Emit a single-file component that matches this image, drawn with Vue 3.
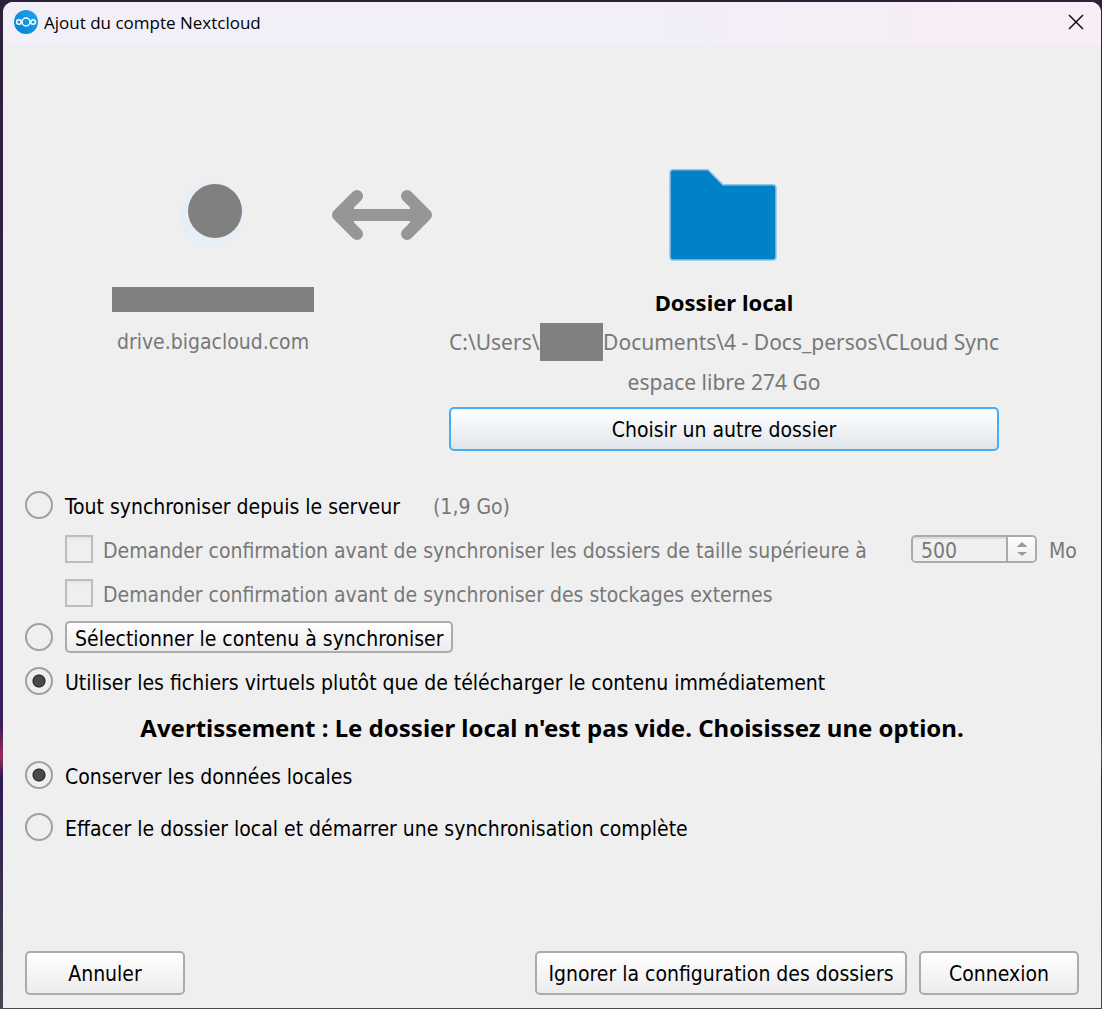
<script setup>
import { ref } from 'vue'

const syncMode = ref('virtual')
const localData = ref('keep')
const confirmSize = ref(false)
const confirmExternal = ref(false)
const maxSize = ref('500')
</script>

<template>
  <div class="desktop">
    <div class="dialog">
      <header class="titlebar">
        <svg class="logo" viewBox="0 0 24 24" aria-hidden="true">
          <defs>
            <linearGradient id="logo-fill" x1="0" y1="1" x2="1" y2="0">
              <stop offset="0" stop-color="#0a7fd0" />
              <stop offset="1" stop-color="#1aa7f2" />
            </linearGradient>
          </defs>
          <circle cx="12" cy="12" r="12" fill="url(#logo-fill)" />
          <g fill="none" stroke="#fff" stroke-width="1.5">
            <circle cx="12" cy="12" r="4" />
            <circle cx="4.9" cy="12" r="2.3" />
            <circle cx="19.1" cy="12" r="2.3" />
          </g>
        </svg>
        <h1 class="title">Ajout du compte Nextcloud</h1>
        <button class="close" type="button" aria-label="Fermer">
          <svg viewBox="0 0 16 16" width="16" height="16"><path d="M1 1 15 15M15 1 1 15" stroke="#111" stroke-width="1.5" /></svg>
        </button>
      </header>

      <main class="content">
        <section class="accounts">
          <div class="side">
            <div class="picture">
              <svg width="66" height="66" viewBox="0 0 66 66" aria-hidden="true">
                <circle cx="32" cy="33" r="32" fill="#e8eef8" />
                <circle cx="35" cy="29" r="27" fill="#808080" />
              </svg>
            </div>
            <div class="line name"><span class="mask user"></span></div>
            <div class="line muted">drive.bigacloud.com</div>
          </div>

          <div class="picture link">
            <svg width="100" height="52" viewBox="0 0 100 52" aria-hidden="true">
              <g fill="none" stroke="#969696" stroke-width="12" stroke-linecap="round" stroke-linejoin="round">
                <path d="M10 26H90" />
                <path d="M25 7 6 26 25 45" />
                <path d="M75 7 94 26 75 45" />
              </g>
              <path d="M6 26 22 12V40ZM94 26 78 12V40Z" fill="#969696" />
            </svg>
          </div>

          <div class="side local">
            <div class="picture">
              <svg width="110" height="92" viewBox="0 0 110 92" aria-hidden="true">
                <path d="M4 .8H39L54 15.800H104Q107 15.800 107 19V88Q107 91 104 91H4Q1 91 1 88V4Q1 .8 4 .8Z" fill="#0082c9" stroke="#8fc6e4" stroke-width="1.500" />
              </svg>
            </div>
            <h2 class="line strong">Dossier local</h2>
            <div class="line muted detail">
              <span>C:\Users\</span><span class="mask folder"></span><span>Documents\4 - Docs_persos\CLoud Sync</span>
            </div>
            <div class="line muted detail">espace libre 274 Go</div>
            <button class="btn focused" type="button">Choisir un autre dossier</button>
          </div>
        </section>

        <section class="options">
          <div class="row">
            <input id="all" v-model="syncMode" type="radio" name="sync" value="all" />
            <label class="main-label" for="all">Tout synchroniser depuis le serveur</label>
            <span class="muted total">(1,9 Go)</span>
          </div>
          <div class="row sub muted">
            <input id="size" v-model="confirmSize" type="checkbox" disabled />
            <label for="size">Demander confirmation avant de synchroniser les dossiers de taille supérieure à</label>
            <span class="spin">
              <input id="limit" v-model="maxSize" type="text" disabled />
              <span class="arrows" aria-hidden="true">
                <svg width="12" height="14" viewBox="0 0 12 14"><path d="M6 0 11.500 5H.5ZM6 14 11 10H1Z" fill="#9c9c9c" /></svg>
              </span>
            </span>
            <label class="unit" for="limit">Mo</label>
          </div>
          <div class="row sub muted">
            <input id="external" v-model="confirmExternal" type="checkbox" disabled />
            <label for="external">Demander confirmation avant de synchroniser des stockages externes</label>
          </div>
          <div class="row">
            <input v-model="syncMode" type="radio" name="sync" value="select" aria-label="Sélectionner le contenu à synchroniser" />
            <button class="btn compact" type="button">Sélectionner le contenu à synchroniser</button>
          </div>
          <div class="row">
            <input id="virtual" v-model="syncMode" type="radio" name="sync" value="virtual" />
            <label for="virtual">Utiliser les fichiers virtuels plutôt que de télécharger le contenu immédiatement</label>
          </div>
        </section>

        <p class="warning strong">Avertissement : Le dossier local n'est pas vide. Choisissez une option.</p>

        <section class="options spaced">
          <div class="row">
            <input id="keep" v-model="localData" type="radio" name="local" value="keep" />
            <label for="keep">Conserver les données locales</label>
          </div>
          <div class="row">
            <input id="erase" v-model="localData" type="radio" name="local" value="erase" />
            <label for="erase">Effacer le dossier local et démarrer une synchronisation complète</label>
          </div>
        </section>
      </main>

      <footer class="footer">
        <button class="btn action cancel" type="button">Annuler</button>
        <button class="btn action skip" type="button">Ignorer la configuration des dossiers</button>
        <button class="btn action" type="button">Connexion</button>
      </footer>
    </div>
  </div>
</template>

<style>
body {
  margin: 0;
}
</style>

<style scoped>
* {
  box-sizing: border-box;
}

.desktop {
  display: flex;
  min-height: 100vh;
  padding: 2px 1px 1px 3px;
  background: linear-gradient(#2c2138, #3b1f5c 60%, #3b1f5c 72%, #a02a55 75%, #2d1a55 77%, #4a444e);
  font-family: Tahoma, "DejaVu Sans Condensed", "Noto Sans", sans-serif;
  font-size: 21px;
  line-height: 28px;
  color: #000;
}

.dialog {
  flex: 1;
  display: flex;
  flex-direction: column;
  border-radius: 10px 10px 0 0;
  overflow: hidden;
  background: #efefef;
}

.titlebar {
  display: flex;
  align-items: center;
  gap: 6px;
  height: 43px;
  padding: 0 17px 3px 11px;
  background: linear-gradient(90deg, #f2eff8 60%, #f9edf6);
}

.logo {
  width: 24px;
  height: 24px;
}

.title {
  flex: 1;
  margin: 0;
  padding-top: 1px;
  font: 400 17px/24px "Segoe UI", "Open Sans", sans-serif;
}

.close {
  display: flex;
  padding: 0;
  border: 0;
  background: none;
}

.content {
  flex: 1;
  padding: 124px 22px 0;
}

.accounts {
  display: flex;
  justify-content: center;
  gap: 17px;
  padding-left: 7px;
}

.side {
  display: flex;
  flex-direction: column;
  align-items: center;
}

.local {
  width: 550px;
}

.picture {
  display: flex;
  align-items: center;
  justify-content: center;
  height: 92px;
}

.link {
  padding-left: 1px;
}

.picture + .line {
  margin-top: 21px;
}

.line {
  display: flex;
  align-items: center;
  justify-content: center;
  width: 100%;
  height: 40px;
  margin: 0;
  white-space: nowrap;
}

.mask {
  background: #808080;
}

.user {
  width: 202px;
  height: 25px;
  margin-bottom: 5px;
}

.folder {
  flex: 1;
  height: 38px;
}

.muted {
  color: #787878;
}

.detail,
.strong {
  font-family: Tahoma, "Noto Sans", sans-serif;
}

.strong {
  font-size: 22px;
  font-weight: 700;
}

.btn {
  padding: 2px 8px 0;
  border: 2px solid #ababab;
  border-radius: 5px;
  background: linear-gradient(#fff, #ececec);
  font: inherit;
  color: #000;
  white-space: nowrap;
}

.focused {
  width: 100%;
  height: 44px;
  margin-top: 5px;
  border-color: #43adf8;
  background: linear-gradient(#fff, #e1e6eb);
}

.compact {
  height: 32px;
}

.options {
  display: flex;
  flex-direction: column;
  margin-top: 32px;
}

.spaced {
  gap: 8px;
  margin-top: 0;
}

.row {
  display: flex;
  align-items: center;
  height: 44px;
  white-space: nowrap;
}

.row > label,
.total {
  padding-top: 3px;
}

.main-label {
  min-width: 345px;
}

.row > input {
  flex: none;
  appearance: none;
  width: 28px;
  height: 28px;
  margin: 0 12px 0 0;
  border: 2px solid #a0a0a0;
}

.row > input[type="radio"] {
  border-radius: 50%;
}

.row > input[type="radio"]:checked {
  background: radial-gradient(circle, #4a4a4a 5px, #222 6px, transparent 7px);
}

.row > input[type="checkbox"] {
  margin-right: 10px;
  border-color: #bdbdbd;
  box-shadow: inset 0 2px 2px #e4e4e4;
}

.sub {
  padding-left: 40px;
}

.total {
  margin-left: 23px;
}

.spin {
  display: flex;
  width: 126px;
  height: 28px;
  margin: 0 12px 0 auto;
  border: 2px solid #ababab;
  border-radius: 5px;
  background: #efefef;
  overflow: hidden;
}

.spin input {
  flex: 1;
  min-width: 0;
  padding: 3px 0 0 8px;
  border: 0;
  background: linear-gradient(#dcdcdc 2px, #efefef 2px);
  font: inherit;
  line-height: 21px;
  color: inherit;
}

.arrows {
  display: flex;
  align-items: center;
  justify-content: center;
  width: 29px;
  border-left: 2px solid #ababab;
  background: linear-gradient(#fdfdfd, #efefef);
}

.unit {
  min-width: 30px;
}

.warning {
  margin: 0;
  padding: 11px 0;
  font-size: 24px;
  text-align: center;
}

.footer {
  display: flex;
  gap: 12px;
  padding: 0 22px 13px;
}

.action {
  min-width: 160px;
  height: 44px;
}

.skip {
  min-width: 372px;
}

.cancel {
  margin-right: auto;
}
</style>
